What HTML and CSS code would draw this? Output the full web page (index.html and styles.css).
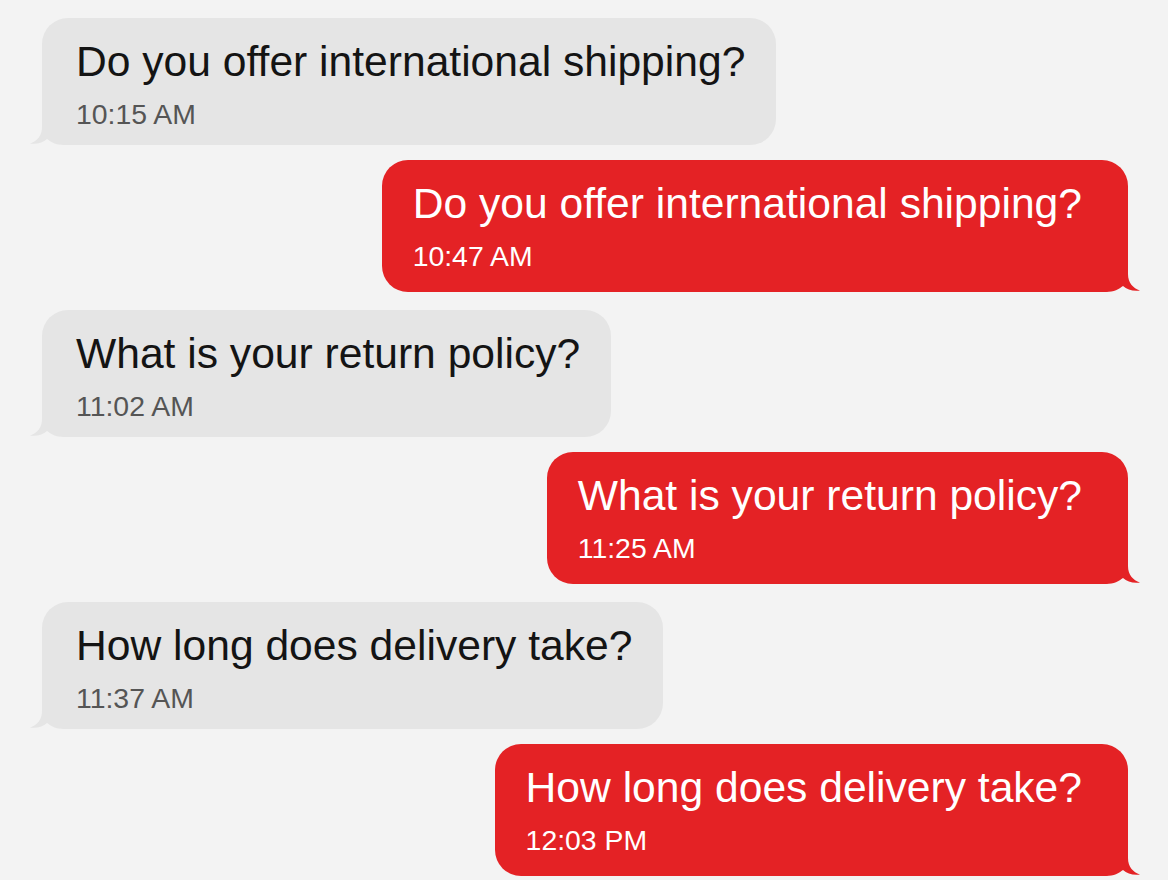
FILE: index.html
```html
<!DOCTYPE html>
<html lang="en">
<head>
<meta charset="utf-8">
<title>Chat</title>
<link rel="stylesheet" href="styles.css">
</head>
<body>
<main class="thread">
  <div class="bubble in">
    <p class="msg">Do you offer international shipping?</p>
    <p class="time">10:15 AM</p>
    <svg class="tail" viewBox="0 0 40 30" width="40" height="30" aria-hidden="true"><path d="M12 0 L12 12 C12 21 7 26 0 28.5 C7 29.5 13 27.5 17 24 C21 27 26 30 34 30 L40 30 L40 0 Z"/></svg>
  </div>
  <div class="bubble out">
    <p class="msg">Do you offer international shipping?</p>
    <p class="time">10:47 AM</p>
    <svg class="tail" viewBox="0 0 40 30" width="40" height="30" aria-hidden="true"><path d="M12 0 L12 12 C12 21 7 26 0 28.5 C7 29.5 13 27.5 17 24 C21 27 26 30 34 30 L40 30 L40 0 Z"/></svg>
  </div>
  <div class="bubble in">
    <p class="msg">What is your return policy?</p>
    <p class="time">11:02 AM</p>
    <svg class="tail" viewBox="0 0 40 30" width="40" height="30" aria-hidden="true"><path d="M12 0 L12 12 C12 21 7 26 0 28.5 C7 29.5 13 27.5 17 24 C21 27 26 30 34 30 L40 30 L40 0 Z"/></svg>
  </div>
  <div class="bubble out">
    <p class="msg">What is your return policy?</p>
    <p class="time">11:25 AM</p>
    <svg class="tail" viewBox="0 0 40 30" width="40" height="30" aria-hidden="true"><path d="M12 0 L12 12 C12 21 7 26 0 28.5 C7 29.5 13 27.5 17 24 C21 27 26 30 34 30 L40 30 L40 0 Z"/></svg>
  </div>
  <div class="bubble in">
    <p class="msg">How long does delivery take?</p>
    <p class="time">11:37 AM</p>
    <svg class="tail" viewBox="0 0 40 30" width="40" height="30" aria-hidden="true"><path d="M12 0 L12 12 C12 21 7 26 0 28.5 C7 29.5 13 27.5 17 24 C21 27 26 30 34 30 L40 30 L40 0 Z"/></svg>
  </div>
  <div class="bubble out">
    <p class="msg">How long does delivery take?</p>
    <p class="time">12:03 PM</p>
    <svg class="tail" viewBox="0 0 40 30" width="40" height="30" aria-hidden="true"><path d="M12 0 L12 12 C12 21 7 26 0 28.5 C7 29.5 13 27.5 17 24 C21 27 26 30 34 30 L40 30 L40 0 Z"/></svg>
  </div>
</main>
</body>
</html>
```
FILE: styles.css
```css
html, body {
  margin: 0;
  padding: 0;
  background: #f3f3f3;
}
body {
  font-family: "Liberation Sans", Arial, Helvetica, sans-serif;
  overflow: hidden;
  height: 880px;
}
.thread {
  display: flex;
  flex-direction: column;
  padding: 18px 40px 0 42px;
}
.bubble {
  position: relative;
  border-radius: 26px;
  padding-top: 19px;
}
.bubble p {
  margin: 0;
  white-space: nowrap;
}
.msg {
  font-size: 42.6px;
  line-height: 48px;
}
.time {
  font-size: 28.4px;
  line-height: 32px;
  margin-top: 13px !important;
}
.in {
  align-self: flex-start;
  background: #e5e5e5;
  color: #141414;
  padding-left: 34px;
  padding-right: 31px;
  padding-bottom: 15px;
  margin-bottom: 15px;
}
.in .time {
  color: #555555;
}
.out {
  align-self: flex-end;
  background: #e42225;
  color: #ffffff;
  padding-left: 31px;
  padding-right: 46px;
  padding-bottom: 20px;
  margin-bottom: 18px;
}
.tail {
  position: absolute;
  bottom: 0;
  display: block;
}
.in .tail {
  left: -12px;
  fill: #e5e5e5;
}
.out .tail {
  right: -12px;
  transform: scaleX(-1);
  fill: #e42225;
}
```
